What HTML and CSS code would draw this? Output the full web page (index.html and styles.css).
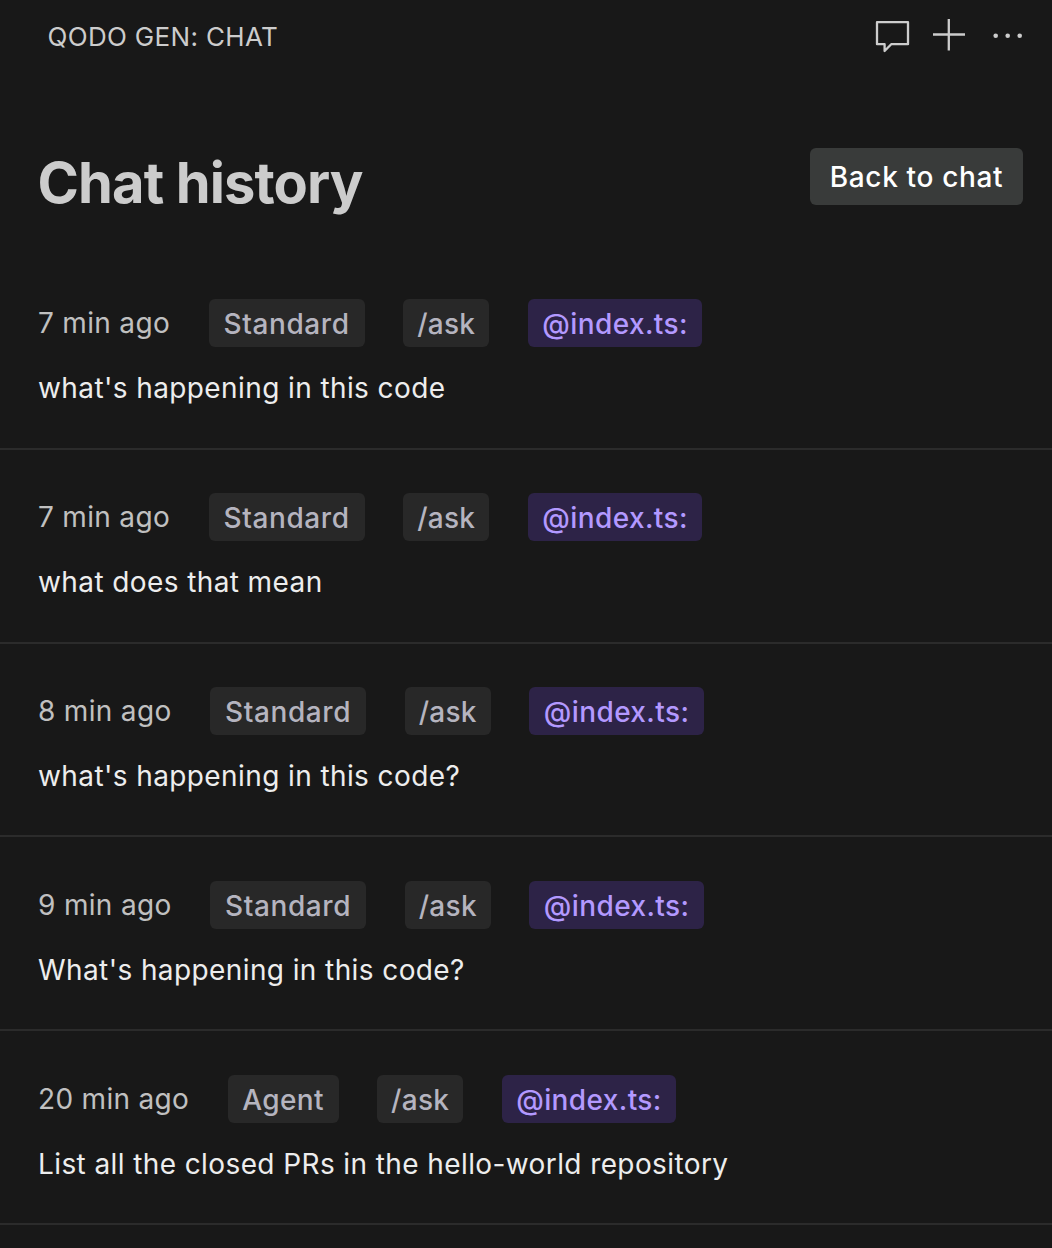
FILE: index.html
```html
<!DOCTYPE html>
<html lang="en">
    <head>
        <meta charset="utf-8">
        <title>Chat history</title>
        <link rel="stylesheet" href="styles.css">
    </head>

    <body>
        <header class="topbar">
            <span class="topbar-title">QODO GEN: CHAT</span>
            <div class="actions">
                <svg class="icon-chat" width="36" height="34" viewBox="0 0 36 34"><path d="M3 3.2H34V25.2H17.2L10.6 32V25.2H3Z"/></svg>
                <svg class="icon-plus" width="32" height="32" viewBox="0 0 32 32"><path d="M15.8 0V31.5M0 15.5H32"/></svg>
                <svg class="icon-more" width="30" height="6" viewBox="0 0 30 6"><circle cx="2.7" cy="2.8" r="2.3"/><circle cx="14.7" cy="2.8" r="2.3"/><circle cx="26.7" cy="2.8" r="2.3"/></svg>
            </div>
        </header>

        <div class="heading">
            <h1>Chat history</h1>
            <button class="back">Back to chat</button>
        </div>

        <div class="history">
            <div class="item">
                <div class="meta">
                    <span class="time">7 min ago</span>
                    <span class="tag">Standard</span>
                    <span class="tag command">/ask</span>
                    <span class="tag file">@index.ts:</span>
                </div>
                <p>what's happening in this code</p>
            </div>
            <div class="item">
                <div class="meta">
                    <span class="time">7 min ago</span>
                    <span class="tag">Standard</span>
                    <span class="tag command">/ask</span>
                    <span class="tag file">@index.ts:</span>
                </div>
                <p>what does that mean</p>
            </div>
            <div class="item">
                <div class="meta">
                    <span class="time">8 min ago</span>
                    <span class="tag">Standard</span>
                    <span class="tag command">/ask</span>
                    <span class="tag file">@index.ts:</span>
                </div>
                <p>what's happening in this code?</p>
            </div>
            <div class="item">
                <div class="meta">
                    <span class="time">9 min ago</span>
                    <span class="tag">Standard</span>
                    <span class="tag command">/ask</span>
                    <span class="tag file">@index.ts:</span>
                </div>
                <p>What's happening in this code?</p>
            </div>
            <div class="item">
                <div class="meta">
                    <span class="time">20 min ago</span>
                    <span class="tag agent">Agent</span>
                    <span class="tag command">/ask</span>
                    <span class="tag file">@index.ts:</span>
                </div>
                <p>List all the closed PRs in the hello-world repository</p>
            </div>
        </div>
    </body>
</html>
```
FILE: styles.css
```css
* {
  box-sizing: border-box;
}

body {
  margin: 0;
  background-color: #181818;
  color: #ededed;
  font-family: Inter, sans-serif;
  font-size: 28px;
  letter-spacing: 0.4px;
}

.topbar {
  display: flex;
  justify-content: space-between;
  align-items: center;
  height: 72px;
  padding: 0 29px 0 47.5px;
}

.topbar-title {
  color: #cccccc;
  font-size: 26px;
  letter-spacing: 0.33px;
}

.actions {
  display: flex;
  align-items: center;
  color: #cccccc;
}

.actions svg {
  fill: none;
  stroke: currentColor;
  stroke-width: 2.3;
  stroke-linejoin: round;
}

.icon-plus {
  margin: 0 28px 2px 23px;
}

.actions .icon-more {
  fill: currentColor;
  stroke: none;
}

.heading {
  display: flex;
  justify-content: space-between;
  align-items: flex-start;
  height: 184px;
  padding: 76px 29px 0 37.5px;
}

h1 {
  margin: 0;
  color: #cccccc;
  font-size: 56px;
  line-height: 70px;
  font-weight: 700;
  letter-spacing: -0.88px;
}

.back {
  width: 213px;
  height: 57px;
  padding: 0;
  border: none;
  border-radius: 6px;
  background-color: #393b3a;
  color: #ffffff;
  font: inherit;
  font-weight: 500;
  letter-spacing: 0.65px;
}

.item {
  height: 193.77px;
  padding: 43.45px 38px 0;
  border-bottom: 2px solid #2b2b2b;
}

.meta {
  display: flex;
  align-items: center;
  gap: 38.5px;
  height: 48px;
}

.time {
  color: #c0c0c0;
  line-height: 50px;
  letter-spacing: 0.32px;
}

.tag {
  height: 48px;
  padding: 0 15px;
  border-radius: 6px;
  background-color: #282828;
  color: #b5b4bf;
  line-height: 50px;
  font-weight: 500;
  letter-spacing: 0.6px;
}

.agent {
  padding: 0 14.5px;
  letter-spacing: 0.4px;
}

.command {
  padding: 0 14px;
  letter-spacing: 0.3px;
}

.file {
  padding: 0 14.5px;
  background-color: #2d2347;
  color: #b399ff;
  letter-spacing: 0.4px;
}

.item p {
  margin: 23px 0 0;
  line-height: 36px;
}
```
